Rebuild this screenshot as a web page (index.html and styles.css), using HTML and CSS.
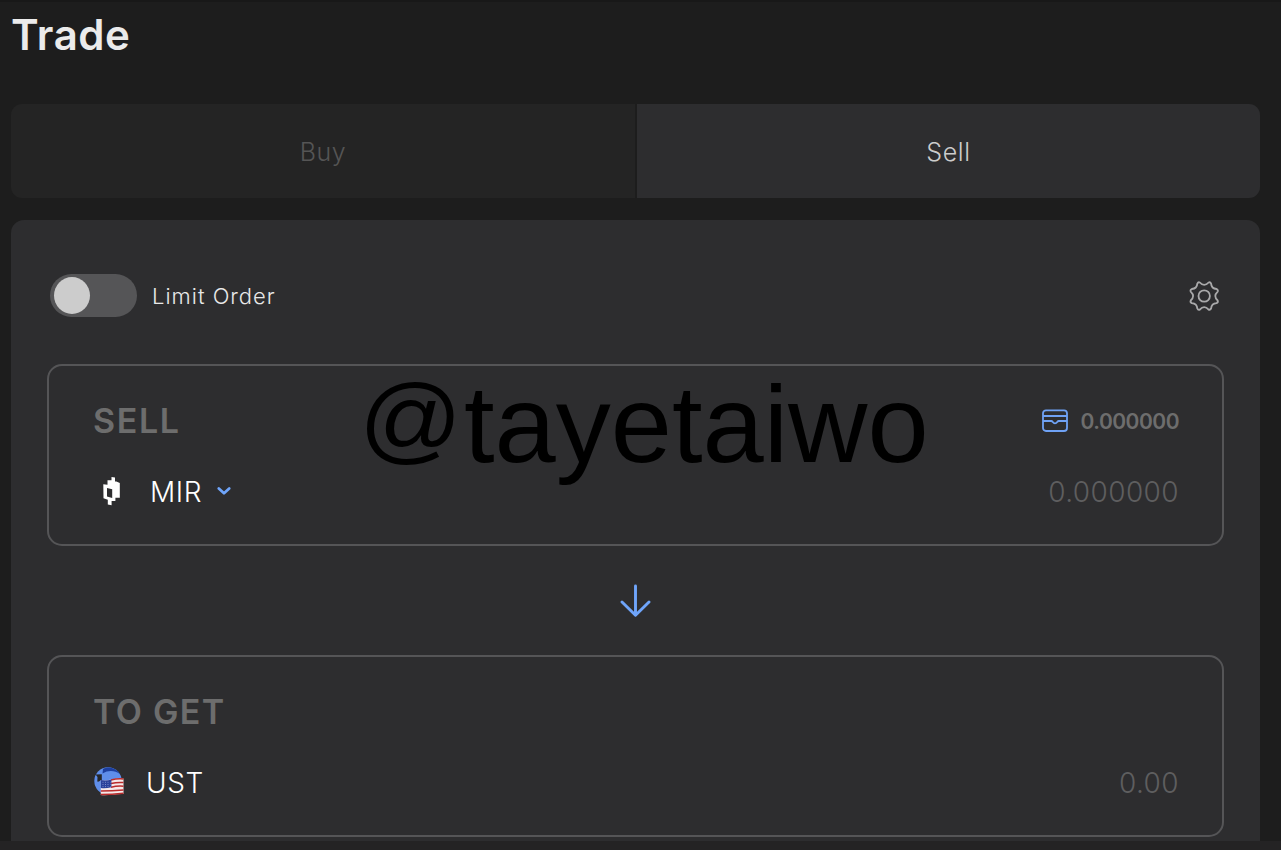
FILE: index.html
```
<!DOCTYPE html>
<html lang="en">
<head>
<meta charset="utf-8">
<title>Trade</title>
<link rel="stylesheet" href="styles.css">
</head>
<body>
<main class="page">
  <h1 class="title"><span>Trade</span></h1>
  <nav class="tabs">
    <a class="tab tab-buy"><span>Buy</span></a>
    <a class="tab tab-sell"><span>Sell</span></a>
  </nav>
  <section class="panel">
    <div class="options">
      <span class="switch"><span class="knob"></span></span>
      <span class="limit">Limit Order</span>
      <svg class="gear" width="32" height="32" viewBox="0 0 32 32" fill="none" stroke="#a9a9aa" stroke-width="1.8" stroke-linejoin="round">
        <path d="M9.3 3.6Q10.2 1.8 11.8 2.5C13.3 4.2 14.6 4.9 16.2 4.9S19.1 4.2 20.6 2.5Q22.3 1.8 23.1 3.6C23.3 7 25.2 8.7 28.6 9Q30.4 10 29.7 11.6C28 13.2 27.3 14.5 27.3 16S28 18.9 29.7 20.5Q30.4 22.2 28.6 23.1C25.2 23.4 23.3 25.1 23.1 28.5Q22.2 30.3 20.6 29.6C19.1 27.9 17.8 27.2 16.2 27.2S13.3 27.9 11.8 29.6Q10.1 30.3 9.3 28.5C9.1 25.1 7.2 23.4 3.8 23.1Q2 22.2 2.7 20.5C4.4 18.9 5.1 17.6 5.1 16S4.4 13.2 2.7 11.6Q2 9.9 3.8 9C7.2 8.7 9.1 7 9.3 3.6Z"/>
        <circle cx="16.2" cy="16" r="5.7"/>
      </svg>
    </div>
    <div class="box">
      <div class="row head">
        <h2 class="label sell">SELL</h2>
        <div class="balance">
          <svg width="26" height="24" viewBox="0 0 26 24" fill="none" stroke="#6fa2f5" stroke-width="1.8">
            <rect x="1" y="1.3" width="24" height="20.7" rx="3"/>
            <path d="M1 7H25M1 12H9.2C11 12 10.6 14.4 13 14.4S15 12 16.8 12H25"/>
          </svg>
          <span class="bal">0.000000</span>
        </div>
      </div>
      <div class="row asset">
        <svg class="mir" width="32" height="32" viewBox="0 0 32 32" fill="#fff" fill-rule="evenodd">
          <path d="M2.3 9.2L6.5 9.8V5.3H10.5V2L14 2.6V6.6H15.4L18.8 8V22.7H14.4V26H10.6V30.2L6.8 29.5V24.8L2.5 23.2ZM6 13V21.4L11.2 22.9V14.2Z"/>
        </svg>
        <span class="symbol mir-text">MIR</span>
        <svg class="chev" width="14" height="10" viewBox="0 0 14 10" fill="none" stroke="#6fa5fb" stroke-width="2.7" stroke-linecap="round" stroke-linejoin="round"><path d="M1.8 2.5L7 7.3L12.2 2.5"/></svg>
        <span class="amount six">0.000000</span>
      </div>
    </div>
    <div class="arrow">
      <svg width="32" height="34" viewBox="0 0 32 34" fill="none" stroke="#6fa5fb" stroke-width="2.9" stroke-linecap="round" stroke-linejoin="round"><path d="M15.5 2V31.3M2 18L15.5 31.3L29 18"/></svg>
    </div>
    <div class="box">
      <div class="row head">
        <h2 class="label get">TO GET</h2>
      </div>
      <div class="row asset">
        <svg class="ust" width="32" height="32" viewBox="0 0 32 32">
          <circle cx="15" cy="15" r="13.7" fill="#5f8eea"/>
          <path d="M10 3C14 .8 20 .6 25 5.5L27 8C22 4.3 15 3.9 9.5 7.5Z" fill="#1d3fa0"/>
          <path d="M2.6 8.4L8.8 8.2V14C7 14 5.8 16.4 4.3 15.6L4.5 11Z" fill="#252629"/>
          <path d="M7.8 14C15 15.8 22 11.5 30.5 12.5V28C22 27.5 15 30 7.8 29Z" fill="#f5e9e9"/>
          <path d="M18 13.9Q24 12.4 30.5 12.9M18 17.6Q24 16.1 30.5 16.6M18 21.2Q24 19.7 30.5 20.2M7.8 25Q19 24.9 30.5 23.9M7.8 28.5Q19 28.5 30.5 27.2" fill="none" stroke="#b92b2b" stroke-width="1.5"/>
          <path d="M7.8 14Q13 15.1 18.4 13.4V21.2Q13 22.6 7.8 22Z" fill="#2b429b"/>
          <path d="M9.5 16.3H17.5M9.5 18.5H17.5M9.5 20.6H17.5" stroke="#8d9bd0" stroke-width=".8" stroke-dasharray="1 1.5"/>
        </svg>
        <span class="symbol ust-text">UST</span>
        <span class="amount two">0.00</span>
      </div>
    </div>
  </section>
  <footer class="bottom"></footer>
</main>
<div class="watermark"><span class="at">@</span>tayetaiwo</div>
</body>
</html>
```
FILE: styles.css
```
* { box-sizing: border-box; }
body { margin: 0; background: #1d1d1d; font-family: Inter, sans-serif; overflow: hidden; }
.page { height: 850px; display: flex; flex-direction: column; position: relative; border-top: 2px solid #181818; }
.title { margin: 0 0 0 11px; height: 102px; padding-top: 7px; font-size: 42px; line-height: 52px; font-weight: 600; letter-spacing: .5px; color: #ebebeb; }
.tabs { display: flex; gap: 2px; margin: 0 21px 22px 11px; height: 94px; flex: none; border-radius: 11px; overflow: hidden; }
.tab { display: flex; justify-content: center; align-items: center; padding-top: 1px; font-size: 25px; font-weight: 300; letter-spacing: .6px; }
.tab-buy { width: 624px; background: #242424; color: #555; }
.tab-sell { flex: 1; background: #2d2d2f; color: #ccc; }
.panel { flex: 1; margin: 0 21px 0 11px; padding: 54px 36px 0; background: #2d2d2f; border-radius: 13px 13px 0 0; overflow: hidden; }
.options { display: flex; align-items: center; height: 43px; margin-bottom: 47px; padding: 0 4px 0 3px; }
.switch { width: 87px; height: 43px; border-radius: 22px; background: #555557; padding: 3px 3px 3px 4px; margin-right: 15px; }
.knob { display: block; width: 36px; height: 37px; border-radius: 50%; background: #ccc; }
.limit { font-size: 22px; font-weight: 300; color: #e8e8e8; letter-spacing: 1px; line-height: 30px; padding-top: 1px; }
.gear { margin-left: auto; }
.box { height: 182px; border: 2px solid #555557; border-radius: 15px; padding: 34px 43px 0 44px; }
.row { display: flex; align-items: center; }
.head { height: 42px; justify-content: space-between; margin-bottom: 29px; }
.label { margin: 0; font-size: 34px; line-height: 42px; font-weight: 600; color: #6d6d6d; letter-spacing: 1.3px; }
.sell { letter-spacing: 1.6px; }
.balance { display: flex; align-items: center; gap: 13px; font-size: 21px; font-weight: 600; color: #6d6d6d; }
.bal { letter-spacing: -.5px; }
.asset { height: 40px; }
.symbol { font-size: 28px; font-weight: 300; color: #fff; line-height: 40px; padding-top: 1px; letter-spacing: .6px; }
.mir { margin: 0 17px 0 8px; }
.ust { margin-right: 21px; }
.chev { margin-left: 15px; }
.amount { margin-left: auto; padding-top: 1px; font-size: 28px; font-weight: 300; letter-spacing: .4px; color: #5e5e5f; }
.arrow { height: 109px; display: flex; justify-content: center; align-items: center; }
.bottom { height: 9px; flex: none; background: #242324; }
.watermark { position: absolute; left: 359px; top: 361px; font: 110px/126px "Liberation Sans", sans-serif; letter-spacing: 0; color: #000; white-space: nowrap; display: flex; }
.at { width: 105px; transform: scale(.925, .874); transform-origin: 0 16%; }
```
